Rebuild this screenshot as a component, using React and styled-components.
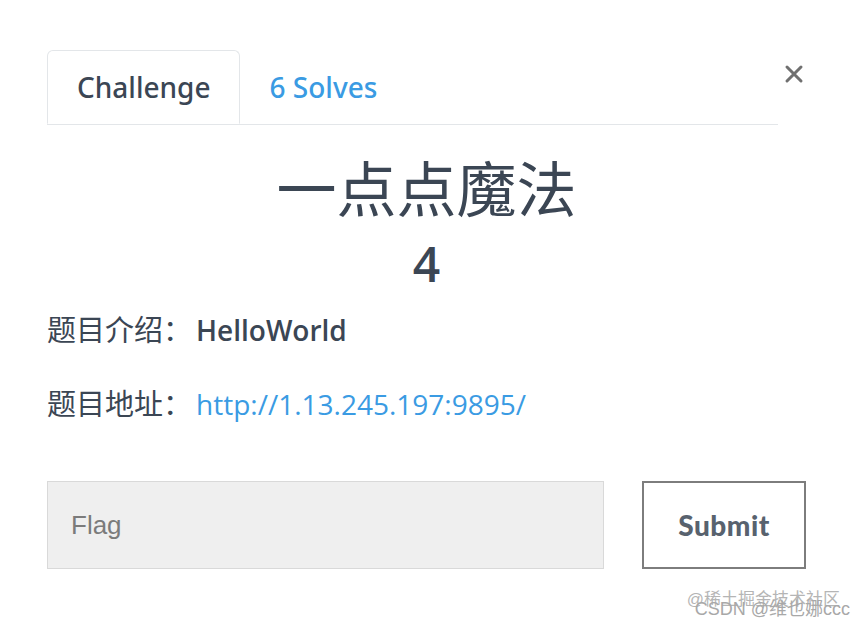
import React, { useState } from "react";
import styled, { createGlobalStyle } from "styled-components";

const GlobalStyle = createGlobalStyle`
  body {
    margin: 0;
    background: #ffffff;
    font-family: "Open Sans", "Noto Sans CJK SC", sans-serif;
    color: #3b4654;
  }
`;

const Page = styled.div`
  position: relative;
  width: 865px;
  height: 632px;
  padding: 50px 0 0 47px;
  box-sizing: border-box;
  overflow: hidden;
`;

const Header = styled.div`
  display: flex;
  align-items: flex-start;
`;

const TabList = styled.div`
  display: flex;
  width: 731px;
  border-bottom: 1px solid #e3e6e9;
`;

const Tab = styled.div`
  height: 72px;
  display: flex;
  align-items: center;
  padding: 0 28px 0 29px;
  font-family: "Noto Sans", "Open Sans", sans-serif;
  font-size: 28px;
  font-weight: 500;
  margin-bottom: ${(p) => (p.active ? "-1px" : "0")};
  border: 1px solid ${(p) => (p.active ? "#e3e6e9" : "transparent")};
  border-bottom-color: ${(p) => (p.active ? "#ffffff" : "transparent")};
  border-radius: 6px 6px 0 0;
  background: ${(p) => (p.active ? "#ffffff" : "transparent")};
  color: ${(p) => (p.active ? "#3b4654" : "#3a9be3")};
  cursor: pointer;
`;

const Close = styled.button`
  margin: 10px 0 0 2px;
  width: 28px;
  height: 28px;
  padding: 0;
  border: none;
  background: none;
  display: flex;
  align-items: center;
  justify-content: center;
  cursor: pointer;
`;

const Body = styled.div`
  width: 759px;
`;

const Title = styled.h1`
  margin: 29px 0 0;
  text-align: center;
  font-size: 60px;
  font-weight: 400;
  line-height: 70px;
  color: #3b4654;
`;

const Points = styled.div`
  text-align: center;
  font-size: 48px;
  font-weight: 600;
  line-height: 56px;
  margin-top: 12px;
  color: #3b4654;
`;

const InfoRow = styled.p`
  margin: ${(p) => p.gap}px 0 0;
  font-size: 29px;
  line-height: 40px;
  color: #3b4654;
`;

const Strong = styled.span`
  margin-left: 4px;
  font-size: 28px;
  font-weight: 600;
`;

const Link = styled.a`
  margin-left: 4px;
  font-size: 28px;
  color: #3a9be3;
  font-weight: 500;
  text-decoration: none;
`;

const FlagForm = styled.form`
  display: flex;
  gap: 38px;
  margin-top: 57px;
`;

const FlagInput = styled.input`
  width: 557px;
  height: 88px;
  box-sizing: border-box;
  border: 1px solid #d9d9d9;
  background: #efefef;
  padding: 0 23px;
  font-family: "Liberation Sans", Arial, sans-serif;
  font-size: 26px;
  color: #333;
  outline: none;
  &::placeholder {
    color: #7b7b7b;
  }
`;

const SubmitButton = styled.button`
  width: 164px;
  height: 88px;
  box-sizing: border-box;
  border: 2px solid #7d7d7d;
  background: #ffffff;
  font-family: "Lato", "Open Sans", sans-serif;
  font-size: 28px;
  font-weight: 900;
  letter-spacing: 0.5px;
  color: #58626e;
  cursor: pointer;
`;

const Watermark = styled.div`
  position: absolute;
  right: 15px;
  bottom: 12px;
  width: 180px;
  height: 30px;
  font-family: "Liberation Sans", "Noto Sans CJK SC", sans-serif;
  pointer-events: none;
`;

const Mark = styled.span`
  position: absolute;
  right: ${(p) => p.right}px;
  top: ${(p) => p.top}px;
  font-size: ${(p) => p.size}px;
  line-height: 1;
  white-space: nowrap;
  color: ${(p) => p.color};
`;

const CloseIcon = () => (
  <svg width="20" height="20" viewBox="0 0 20 20">
    <path d="M3 3 L17 17 M17 3 L3 17" stroke="#707070" strokeWidth="3" strokeLinecap="round" />
  </svg>
);

export default function App() {
  const [tab, setTab] = useState("challenge");
  const [flag, setFlag] = useState("");

  return (
    <Page>
      <GlobalStyle />
      <Header>
        <TabList>
          <Tab active={tab === "challenge"} onClick={() => setTab("challenge")}>
            Challenge
          </Tab>
          <Tab active={tab === "solves"} onClick={() => setTab("solves")}>
            6 Solves
          </Tab>
        </TabList>
        <Close aria-label="close">
          <CloseIcon />
        </Close>
      </Header>
      <Body>
        <Title>一点点魔法</Title>
        <Points>4</Points>
        <InfoRow gap={18}>
          题目介绍：<Strong>HelloWorld</Strong>
        </InfoRow>
        <InfoRow gap={34}>
          题目地址：<Link href="#">http://1.13.245.197:9895/</Link>
        </InfoRow>
        <FlagForm onSubmit={(e) => e.preventDefault()}>
          <FlagInput
            placeholder="Flag"
            value={flag}
            onChange={(e) => setFlag(e.target.value)}
          />
          <SubmitButton type="submit">Submit</SubmitButton>
        </FlagForm>
      </Body>
      <Watermark>
        <Mark top={1} right={10} size={17} color="#b5b5b5">@稀土掘金技术社区</Mark>
        <Mark top={10} right={0} size={18} color="#a8a8a8">CSDN @维也娜ccc</Mark>
      </Watermark>
    </Page>
  );
}
